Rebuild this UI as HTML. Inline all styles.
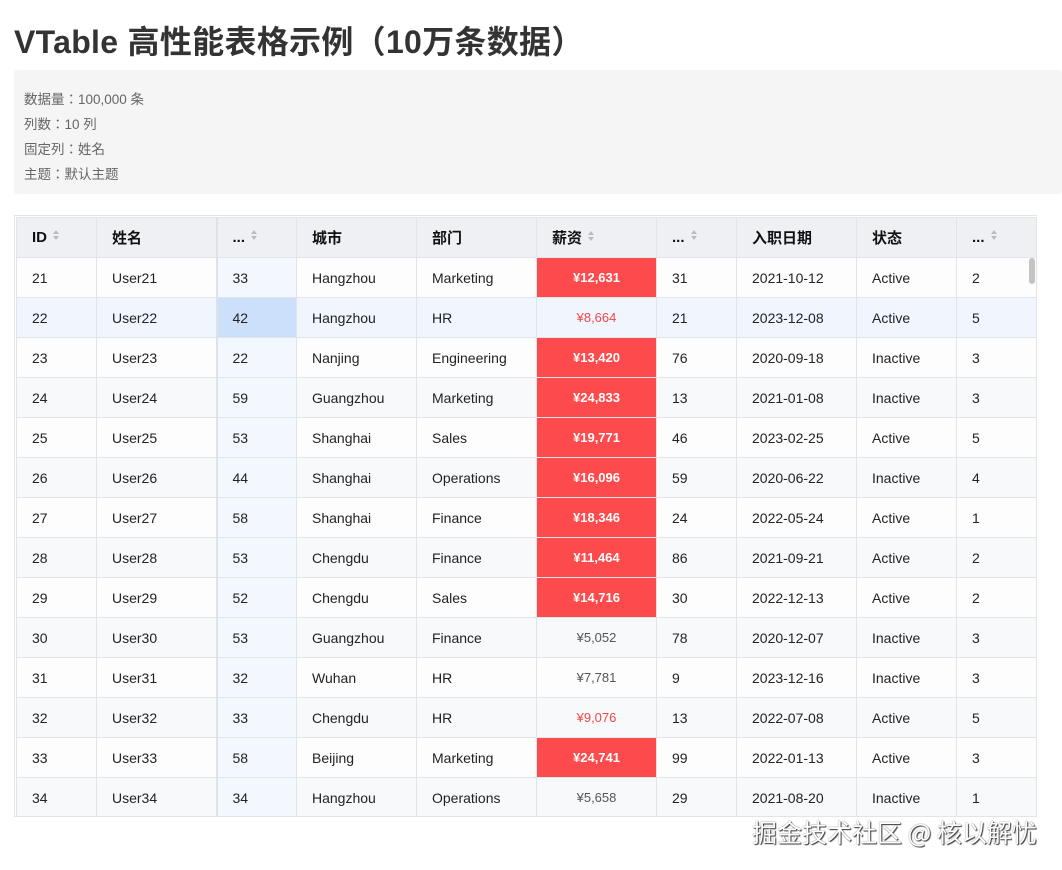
<!DOCTYPE html>
<html><head><meta charset="utf-8"><style>
body{margin:0;background:#fff;font-family:"Liberation Sans","Noto Sans CJK SC",sans-serif;width:1062px;height:870px;overflow:hidden;position:relative}
h1{position:absolute;left:14px;top:17px;margin:0;font-size:32px;font-weight:bold;color:#333;letter-spacing:0.3px}
.info{position:absolute;left:14px;top:70px;width:1048px;height:124px;background:#f5f5f5;border-radius:3px}
.info div{position:absolute;left:10px;font-size:13.5px;color:#666;font-family:"Liberation Sans","Noto Sans CJK JP",sans-serif}
.wrap{position:absolute;left:14px;top:215px;width:1022px;height:600px;border:1px solid #e1e4e8;border-right:none;overflow:hidden}
table{border-collapse:collapse;table-layout:fixed;position:absolute;left:1px;top:1px}
td,th{height:39px;border:1px solid #e1e4e8;padding:0 0 0 15px;font-size:14px;color:#222;text-align:left;white-space:nowrap}
th{background:#eef0f3;font-weight:bold;font-size:15px;color:#111}
tr.o td{background:#fdfdfe}tr.e td{background:#f8f9fb}
tr td.c3{background:#f3f7fe}
tr.h td{background:#f0f5fe}
tr.h td.sel{background:#cde0fb}
td.fz{border-right:2px solid #dde2ea}
td.s{text-align:center;padding:0;font-size:13px;color:#555}
td.s.big{background:#fd4b4d!important;color:#fff;font-weight:bold}
td.s.mid{color:#f04848}
.ar{display:inline-block;margin-left:6px;vertical-align:1px;width:7px;height:11px;position:relative}
.ar:before{content:"";position:absolute;left:0;top:0;border:3.5px solid transparent;border-bottom:4px solid #bbb;border-top:0}
.ar:after{content:"";position:absolute;left:0;top:6px;border:3.5px solid transparent;border-top:4px solid #bbb;border-bottom:0}
.sb{position:absolute;left:1029px;top:258px;width:6px;height:26px;background:#c4c4c4;border-radius:3px}
.wm{position:absolute;left:752px;top:814px;font-size:25px;color:#fff;text-shadow:0 0 1px #444,1px 1px 1px #333;font-family:"Noto Sans CJK SC",sans-serif;white-space:nowrap}
</style></head><body>
<h1>VTable 高性能表格示例（10万条数据）</h1>
<div class="info">
<div style="top:18px">数据量：100,000 条</div>
<div style="top:43px">列数：10 列</div>
<div style="top:68px">固定列：姓名</div>
<div style="top:93px">主题：默认主题</div>
</div>
<div class="wrap">
<table>
<colgroup><col style="width:80px"><col style="width:120px"><col style="width:80px"><col style="width:120px"><col style="width:120px"><col style="width:120px"><col style="width:80px"><col style="width:120px"><col style="width:100px"><col style="width:80px"></colgroup>
<tr><th>ID<span class="ar"></span></th><th style="border-right:2px solid #dde2ea">姓名</th><th>...<span class="ar"></span></th><th>城市</th><th>部门</th><th>薪资<span class="ar"></span></th><th>...<span class="ar"></span></th><th>入职日期</th><th>状态</th><th>...<span class="ar"></span></th></tr>
<tr class="o"><td>21</td><td class="fz">User21</td><td class="c3">33</td><td>Hangzhou</td><td>Marketing</td><td class="s big">¥12,631</td><td>31</td><td>2021-10-12</td><td>Active</td><td>2</td></tr>
<tr class="h"><td>22</td><td class="fz">User22</td><td class="sel">42</td><td>Hangzhou</td><td>HR</td><td class="s mid">¥8,664</td><td>21</td><td>2023-12-08</td><td>Active</td><td>5</td></tr>
<tr class="o"><td>23</td><td class="fz">User23</td><td class="c3">22</td><td>Nanjing</td><td>Engineering</td><td class="s big">¥13,420</td><td>76</td><td>2020-09-18</td><td>Inactive</td><td>3</td></tr>
<tr class="e"><td>24</td><td class="fz">User24</td><td class="c3">59</td><td>Guangzhou</td><td>Marketing</td><td class="s big">¥24,833</td><td>13</td><td>2021-01-08</td><td>Inactive</td><td>3</td></tr>
<tr class="o"><td>25</td><td class="fz">User25</td><td class="c3">53</td><td>Shanghai</td><td>Sales</td><td class="s big">¥19,771</td><td>46</td><td>2023-02-25</td><td>Active</td><td>5</td></tr>
<tr class="e"><td>26</td><td class="fz">User26</td><td class="c3">44</td><td>Shanghai</td><td>Operations</td><td class="s big">¥16,096</td><td>59</td><td>2020-06-22</td><td>Inactive</td><td>4</td></tr>
<tr class="o"><td>27</td><td class="fz">User27</td><td class="c3">58</td><td>Shanghai</td><td>Finance</td><td class="s big">¥18,346</td><td>24</td><td>2022-05-24</td><td>Active</td><td>1</td></tr>
<tr class="e"><td>28</td><td class="fz">User28</td><td class="c3">53</td><td>Chengdu</td><td>Finance</td><td class="s big">¥11,464</td><td>86</td><td>2021-09-21</td><td>Active</td><td>2</td></tr>
<tr class="o"><td>29</td><td class="fz">User29</td><td class="c3">52</td><td>Chengdu</td><td>Sales</td><td class="s big">¥14,716</td><td>30</td><td>2022-12-13</td><td>Active</td><td>2</td></tr>
<tr class="e"><td>30</td><td class="fz">User30</td><td class="c3">53</td><td>Guangzhou</td><td>Finance</td><td class="s">¥5,052</td><td>78</td><td>2020-12-07</td><td>Inactive</td><td>3</td></tr>
<tr class="o"><td>31</td><td class="fz">User31</td><td class="c3">32</td><td>Wuhan</td><td>HR</td><td class="s">¥7,781</td><td>9</td><td>2023-12-16</td><td>Inactive</td><td>3</td></tr>
<tr class="e"><td>32</td><td class="fz">User32</td><td class="c3">33</td><td>Chengdu</td><td>HR</td><td class="s mid">¥9,076</td><td>13</td><td>2022-07-08</td><td>Active</td><td>5</td></tr>
<tr class="o"><td>33</td><td class="fz">User33</td><td class="c3">58</td><td>Beijing</td><td>Marketing</td><td class="s big">¥24,741</td><td>99</td><td>2022-01-13</td><td>Active</td><td>3</td></tr>
<tr class="e"><td>34</td><td class="fz">User34</td><td class="c3">34</td><td>Hangzhou</td><td>Operations</td><td class="s">¥5,658</td><td>29</td><td>2021-08-20</td><td>Inactive</td><td>1</td></tr>
</table>
</div>
<div class="sb"></div>
<div class="wm">掘金技术社区 @ 核以解忧</div>
</body></html>
